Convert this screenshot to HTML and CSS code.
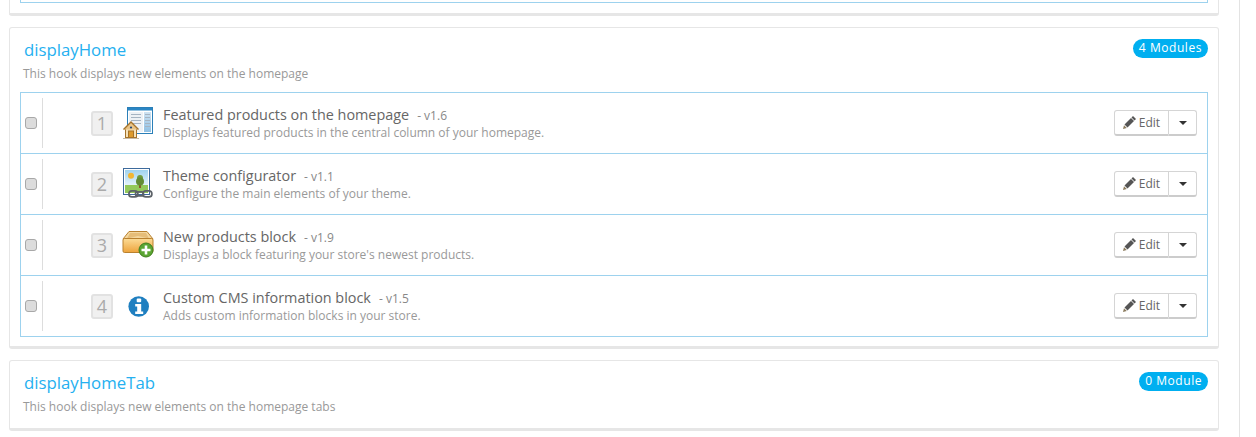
FILE: index.html
```html
<!DOCTYPE html>
<html lang="en">
<head>
<meta charset="utf-8">
<title>Positions</title>
<link rel="stylesheet" href="styles.css">
</head>
<body>
<main class="page">
  <section class="panel panel-stub"><div class="list-stub"></div></section>

  <section class="panel">
    <header class="head">
      <h2 class="hook">displayHome</h2>
      <span class="badge">4 Modules</span>
    </header>
    <p class="hook-desc">This hook displays new elements on the homepage</p>
    <ul class="list">
      <li class="row">
        <input class="check" type="checkbox">
        <span class="sep"></span>
        <span class="pos">1</span>
        <span class="icon">
          <svg width="32" height="32" viewBox="0 0 32 32">
            <defs>
              <linearGradient id="winBlue" x1="0" y1="0" x2="0" y2="1"><stop offset="0" stop-color="#cfe3f2"/><stop offset="1" stop-color="#8fc0e4"/></linearGradient>
            </defs>
            <rect x="5.500" y="0.500" width="25" height="26" fill="#fff" stroke="#2a7fb8"/>
            <rect x="6" y="1" width="24" height="2.500" fill="#2a86c4"/>
            <rect x="7" y="5" width="14" height="20" fill="#edf1f5"/>
            <rect x="22" y="5" width="7" height="20" fill="url(#winBlue)"/>
            <path d="M9 7.500h10M9 10.500h10M9 13.500h10M9 16.500h10M23 7.500h5M23 10.500h5M23 13.500h5M23 16.500h5M23 19.500h5" stroke="#a6b4c2" fill="none"/>
            <rect x="3.500" y="21.500" width="11" height="9" fill="#f6e2b8" stroke="#a5732a"/>
            <path d="M1.500 22.500 9 15 16.500 22.500" fill="#e9c488" stroke="#a5732a" stroke-width="1.400"/>
            <rect x="6.500" y="24" width="5" height="6.500" fill="#dd9a2c" stroke="#a5732a"/>
            <circle cx="9" cy="20.500" r="1.100" fill="#234a78"/>
            <rect x="1" y="31" width="16" height="1" fill="#c8bba5"/>
          </svg>
        </span>
        <div class="info">
          <div class="name-line"><span class="name">Featured products on the homepage</span><span class="ver">- v1.6</span></div>
          <div class="desc">Displays featured products in the central column of your homepage.</div>
        </div>
        <div class="actions"><button class="btn btn-edit" type="button"><svg class="pencil" width="13" height="13" viewBox="0 0 13 13"><path d="M10 0 13 3 11.500 4.500 8.500 1.500Z" fill="#555"/><path d="M8 2 11 5 4.500 11.500 1.500 8.500Z" fill="#555"/><path d="M1 9.200 3.800 12 0 13Z" fill="#8a7a5c"/></svg>Edit</button><button class="btn btn-caret" type="button"><span class="caret"></span></button></div>
      </li>
      <li class="row">
        <input class="check" type="checkbox">
        <span class="sep"></span>
        <span class="pos">2</span>
        <span class="icon">
          <svg width="32" height="32" viewBox="0 0 32 32">
            <defs>
              <linearGradient id="sky" x1="0" y1="0" x2="0" y2="1"><stop offset="0" stop-color="#9fd2ee"/><stop offset="1" stop-color="#e8f5fb"/></linearGradient>
            </defs>
            <rect x="1.500" y="0.500" width="26" height="26" fill="#fff" stroke="#3d6a9c"/>
            <rect x="3" y="2" width="23" height="16" fill="url(#sky)"/>
            <rect x="3" y="17" width="23" height="8" fill="#93c95a"/>
            <circle cx="9" cy="7.700" r="3" fill="#f2b632"/>
            <rect x="17" y="14" width="2" height="6" fill="#8a5a2b"/>
            <circle cx="18" cy="10" r="3" fill="#6f9a3c"/>
            <circle cx="18" cy="13.500" r="4" fill="#628c34"/>
            <g fill="none" stroke="#5c6268" stroke-width="1.700">
              <rect x="6.900" y="22.900" width="9" height="6" rx="3"/>
              <rect x="13.500" y="23.900" width="8" height="4" rx="2"/>
              <rect x="20.900" y="22.900" width="9" height="6" rx="3"/>
            </g>
          </svg>
        </span>
        <div class="info">
          <div class="name-line"><span class="name">Theme configurator</span><span class="ver">- v1.1</span></div>
          <div class="desc">Configure the main elements of your theme.</div>
        </div>
        <div class="actions"><button class="btn btn-edit" type="button"><svg class="pencil" width="13" height="13" viewBox="0 0 13 13"><path d="M10 0 13 3 11.500 4.500 8.500 1.500Z" fill="#555"/><path d="M8 2 11 5 4.500 11.500 1.500 8.500Z" fill="#555"/><path d="M1 9.200 3.800 12 0 13Z" fill="#8a7a5c"/></svg>Edit</button><button class="btn btn-caret" type="button"><span class="caret"></span></button></div>
      </li>
      <li class="row">
        <input class="check" type="checkbox">
        <span class="sep"></span>
        <span class="pos">3</span>
        <span class="icon">
          <svg width="32" height="32" viewBox="0 0 32 32">
            <defs>
              <linearGradient id="box" x1="0" y1="0" x2="0" y2="1"><stop offset="0" stop-color="#fcdc96"/><stop offset="1" stop-color="#eda33c"/></linearGradient>
            </defs>
            <path d="M1 10 7 2.500H25L31 10z" fill="#f3d79f" stroke="#b9812f"/>
            <path d="M5 9.500 8 4H24L27 9.500 16 7z" fill="#e6bd78"/>
            <rect x="1" y="9.500" width="30" height="14" rx="1.500" fill="url(#box)" stroke="#b9812f"/>
            <circle cx="24" cy="21" r="7" fill="#5aa532" stroke="#3f7f1e"/>
            <path d="M24 16.500v9M19.500 21h9" stroke="#fff" stroke-width="2.600"/>
          </svg>
        </span>
        <div class="info">
          <div class="name-line"><span class="name">New products block</span><span class="ver">- v1.9</span></div>
          <div class="desc">Displays a block featuring your store's newest products.</div>
        </div>
        <div class="actions"><button class="btn btn-edit" type="button"><svg class="pencil" width="13" height="13" viewBox="0 0 13 13"><path d="M10 0 13 3 11.500 4.500 8.500 1.500Z" fill="#555"/><path d="M8 2 11 5 4.500 11.500 1.500 8.500Z" fill="#555"/><path d="M1 9.200 3.800 12 0 13Z" fill="#8a7a5c"/></svg>Edit</button><button class="btn btn-caret" type="button"><span class="caret"></span></button></div>
      </li>
      <li class="row">
        <input class="check" type="checkbox">
        <span class="sep"></span>
        <span class="pos">4</span>
        <span class="icon">
          <svg width="32" height="32" viewBox="0 0 32 32">
            <circle cx="16.700" cy="16.500" r="10.300" fill="#1f7fc0"/>
            <rect x="14.700" y="8.500" width="4.500" height="3.800" rx="1" fill="#fff"/>
            <path d="M13.200 14h6v7.500h2V24h-8v-2.500h2v-5h-2z" fill="#fff"/>
          </svg>
        </span>
        <div class="info">
          <div class="name-line"><span class="name">Custom CMS information block</span><span class="ver">- v1.5</span></div>
          <div class="desc">Adds custom information blocks in your store.</div>
        </div>
        <div class="actions"><button class="btn btn-edit" type="button"><svg class="pencil" width="13" height="13" viewBox="0 0 13 13"><path d="M10 0 13 3 11.500 4.500 8.500 1.500Z" fill="#555"/><path d="M8 2 11 5 4.500 11.500 1.500 8.500Z" fill="#555"/><path d="M1 9.200 3.800 12 0 13Z" fill="#8a7a5c"/></svg>Edit</button><button class="btn btn-caret" type="button"><span class="caret"></span></button></div>
      </li>
    </ul>
  </section>

  <section class="panel panel-empty">
    <header class="head">
      <h2 class="hook">displayHomeTab</h2>
      <span class="badge">0 Module</span>
    </header>
    <p class="hook-desc">This hook displays new elements on the homepage tabs</p>
  </section>
</main>
</body>
</html>
```

FILE: styles.css
```css
* { box-sizing: border-box; }
html, body { margin: 0; height: 100%; background: #fff; overflow: hidden; }
body { font-family: "Open Sans", "Liberation Sans", sans-serif; color: #555; }
.page {
  width: 1240px;
  height: 437px;
  padding-left: 9px;
  padding-right: 20px;
  border-right: 1px solid #e3e3e3;
}
.panel {
  width: 1210px;
  margin-bottom: 11px;
  padding: 8px 10px 9px 10px;
  background: #fff;
  border: 1px solid #e6e6e6;
  border-bottom-width: 3px;
  border-radius: 3px;
}
.panel-stub { height: 16px; padding: 0 10px; border-top: 0; border-radius: 0 0 3px 3px; }
.list-stub { height: 3px; border: 1px solid #9dd2ee; border-top: 0; }
.panel-empty { height: 71px; }
.head { display: flex; justify-content: space-between; align-items: flex-start; padding-left: 4px; }
.hook { margin: 0; font-size: 16.800px; line-height: 28px; font-weight: 400; color: #25b0f0; }
.badge {
  margin-top: 3px;
  padding: 0 6px;
  height: 19px;
  line-height: 18px;
  font-size: 12px;
  font-weight: 400;
  letter-spacing: .55px;
  color: #fff;
  background: #00aff0;
  border-radius: 10px;
}
.hook-desc { margin: 2px 0 10px 3px; font-size: 12px; line-height: 16px; color: #999; }
.list { margin: 0; padding: 0; list-style: none; border: 1px solid #9dd2ee; border-bottom: 0; }
.row { display: flex; align-items: center; height: 61px; border-bottom: 1px solid #9dd2ee; }
.check {
  appearance: none;
  flex: none;
  width: 12px;
  height: 12px;
  margin: 0 0 0 4px;
  background: #dcdcdc;
  border: 1px solid #a8a8a8;
  border-radius: 3px;
}
.sep { flex: none; width: 1px; height: 50px; margin-left: 5px; background: #ddd; }
.pos {
  flex: none;
  width: 22px;
  height: 25px;
  margin-left: 48px;
  font-size: 18px;
  line-height: 21px;
  text-align: center;
  color: #aaa;
  background: #f0f0f0;
  border: 2px solid #e2e2e2;
  border-radius: 3px;
}
.icon { flex: none; width: 32px; height: 32px; margin-left: 9px; }
.icon svg { display: block; }
.info { flex: 1; margin-left: 9px; }
.name-line { line-height: 19px; }
.name { font-size: 14.400px; color: #666; }
.ver { margin-left: 8px; font-size: 12px; color: #888; }
.desc { font-size: 12px; line-height: 16px; color: #999; }
.actions { display: flex; flex: none; margin-right: 10px; }
.btn {
  display: flex;
  align-items: center;
  justify-content: center;
  height: 26px;
  padding: 0;
  font-family: inherit;
  font-size: 12px;
  color: #666;
  background: #fff;
  border: 1px solid #d5d5d5;
  border-bottom: 2px solid #ccc;
}
.btn-edit { width: 55px; border-radius: 3px 0 0 3px; }
.btn-caret { width: 28px; border-left: 0; border-radius: 0 3px 3px 0; }
.pencil { margin-right: 3px; }
.caret { width: 0; height: 0; border: 4px solid transparent; border-top-color: #333; border-bottom: 0; }
```
